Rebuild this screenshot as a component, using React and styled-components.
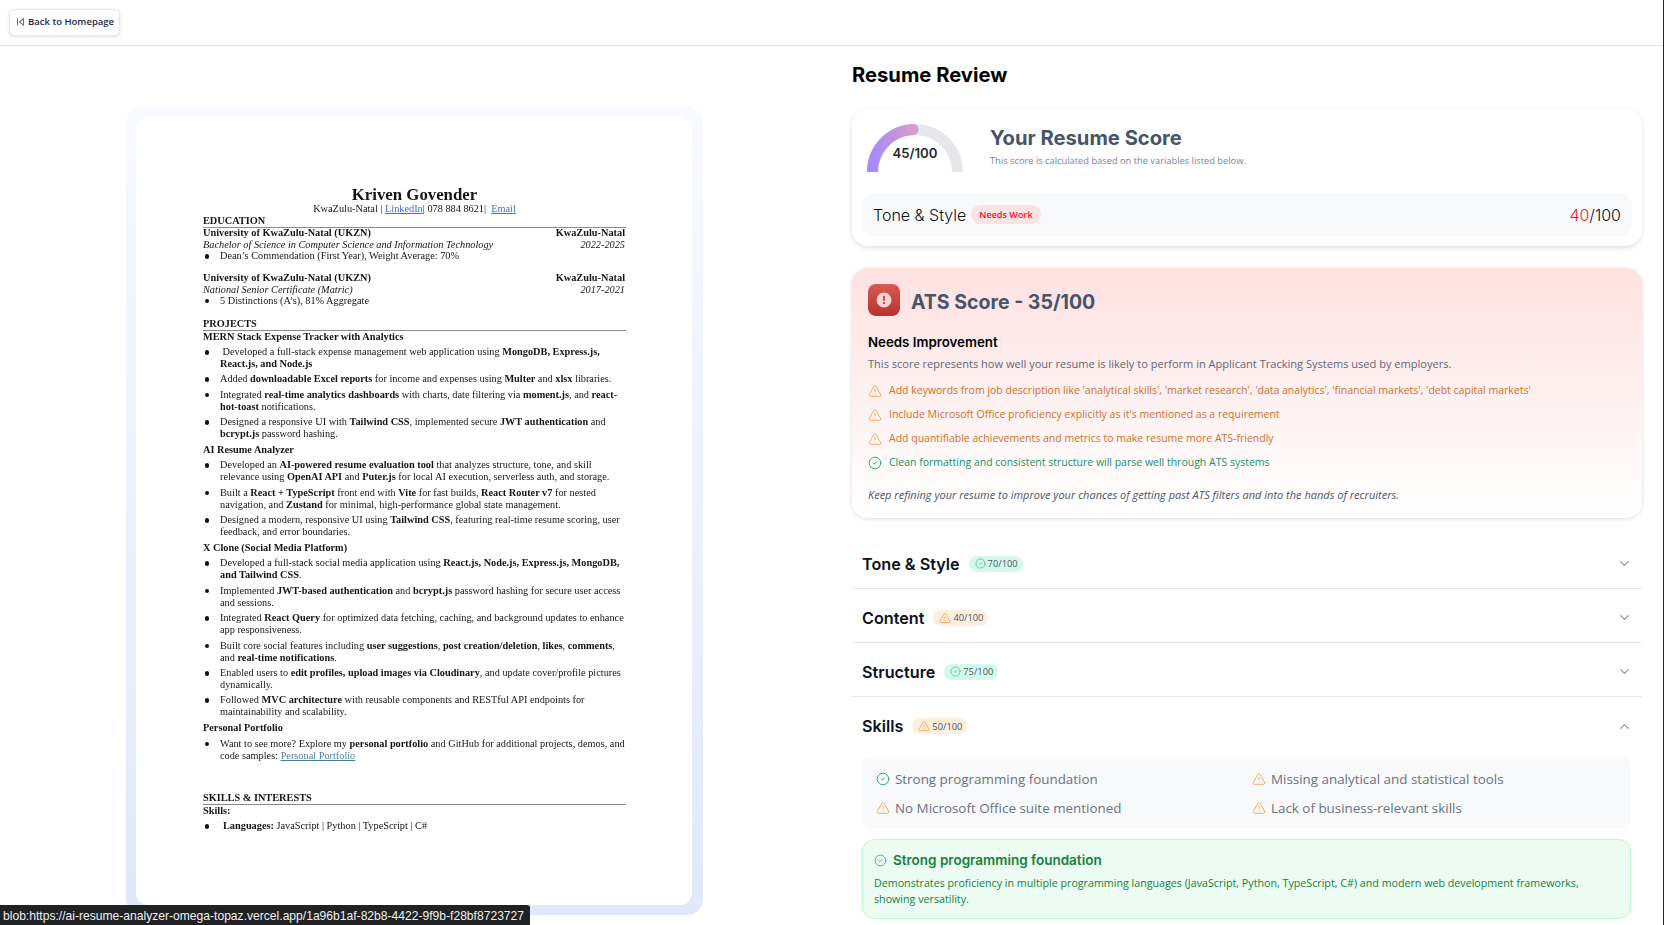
import React from 'react'
import styled, { createGlobalStyle } from 'styled-components'
import { ChevronDown, ChevronUp, TriangleAlert, CircleCheck } from 'lucide-react'

const GlobalStyle = createGlobalStyle`
  html, body {
    margin: 0;
    padding: 0;
    height: 925px;
    overflow: hidden;
    background: #fff;
    font-family: 'Inter', 'Liberation Sans', sans-serif;
  }
  * { box-sizing: border-box; }
`

const Shell = styled.div`
  width: 1664px;
  height: 925px;
  position: relative;
  overflow: hidden;
  border-right: 1px solid #2a2a2a;
  display: flex;
  flex-direction: column;
`

const Nav = styled.nav`
  height: 46px;
  flex: none;
  border-bottom: 1px solid #e5e7eb;
  padding: 9px;
`

const BackButton = styled.a`
  display: inline-flex;
  align-items: center;
  gap: 3px;
  height: 27px;
  width: 111px;
  padding: 0 0 2px 6px;
  background: #fff;
  border: 1px solid #e5e7eb;
  border-radius: 5px;
  box-shadow: 0 1px 3px rgba(0, 0, 0, 0.12);
  color: #1e2a4a;
  font-family: 'Open Sans', sans-serif;
  font-size: 9.5px;
  font-weight: 600;
  white-space: nowrap;
`

const Main = styled.main`
  flex: 1;
  display: flex;
  min-height: 0;
`

const LeftPane = styled.section`
  width: 832px;
  flex: none;
  padding: 61px 0 0 126px;
`

const Frame = styled.div`
  width: 577px;
  height: 808px;
  padding: 10px 11px 10px 10px;
  border-radius: 16px;
  background: linear-gradient(to bottom, #f8faff, #e0e8f9);
`

const Page = styled.div`
  height: 100%;
  padding: 69px 66px 0 67px;
  background: #fff;
  border-radius: 12px;
  color: #151515;
  font-family: 'Liberation Serif', serif;
  font-size: 10.3px;
  line-height: 12px;
  white-space: nowrap;
  filter: blur(0.3px);
`

const Name = styled.div`
  font-size: 16.8px;
  line-height: 17px;
  font-weight: 700;
  text-align: center;
`

const Contact = styled.div`
  text-align: center;
  margin-top: ${p => p.$top || 0}px;
  a { color: #3b6fd8; text-decoration: underline; }
`

const SectionHead = styled.div`
  font-weight: 700;
  border-bottom: 1px solid #8a8a8a;
  margin-top: ${p => p.$top || 0}px;
`

const EntryRow = styled.div`
  display: flex;
  justify-content: space-between;
  padding-right: 1px;
  margin-top: ${p => p.$top || 0}px;
  font-weight: ${p => (p.$italic ? 400 : 700)};
  font-style: ${p => (p.$italic ? 'italic' : 'normal')};
`

const SubHead = styled.div`
  font-weight: 700;
  margin-top: ${p => p.$top || 0}px;
`

const Bullet = styled.div`
  position: relative;
  padding-left: ${p => p.$indent || 17}px;
  margin-top: ${p => (p.$top === undefined ? 3.42 : p.$top)}px;
  &::before {
    content: '';
    position: absolute;
    left: 1.5px;
    top: 4px;
    width: 4.5px;
    height: 4.5px;
    border-radius: 50%;
    background: #111;
  }
  a { color: #4a7fa0; text-decoration: underline; }
`

const RightPane = styled.section`
  flex: 1;
  padding: 16px 21px 0 20px;
  min-width: 0;
`

const PageTitle = styled.h1`
  margin: 0;
  height: 47px;
  font-size: 20.2px;
  line-height: 26px;
  font-weight: 700;
  color: #000;
`

const ScoreCard = styled.div`
  height: 137px;
  margin-top: 0;
  padding: 14px 10px 0 10px;
  border-radius: 16px;
  background: #fff;
  box-shadow: 0 2px 5px rgba(0, 0, 0, 0.12);
`

const ScoreTop = styled.div`
  display: flex;
  align-items: flex-start;
  gap: 27px;
  padding-left: 5px;
`

const GaugeWrap = styled.div`
  position: relative;
  width: 96px;
  height: 49px;
  flex: none;
`

const GaugeText = styled.div`
  position: absolute;
  left: 0;
  right: 0;
  top: 21px;
  text-align: center;
  font-size: 13.2px;
  line-height: 18px;
  font-weight: 600;
  color: #1f2937;
`

const ScoreHeading = styled.div`
  padding-top: 2px;
`

const ScoreTitle = styled.div`
  font-size: 20.2px;
  line-height: 26px;
  font-weight: 700;
  color: #475467;
`

const ScoreSub = styled.div`
  margin-top: 4px;
  font-family: 'Open Sans', sans-serif;
  font-size: 9.3px;
  line-height: 12px;
  color: #7b8494;
`

const CategoryRow = styled.div`
  height: 43px;
  margin-top: 21px;
  padding: 0 11px 0 11px;
  display: flex;
  align-items: center;
  justify-content: space-between;
  border-radius: 12px;
  background: #f8f9fb;
  font-size: 16px;
  color: #0b1220;
  font-weight: 300;
`

const CategoryName = styled.div`
  display: flex;
  align-items: center;
  gap: 5px;
`

const NeedsPill = styled.span`
  display: inline-flex;
  align-items: center;
  height: 19px;
  padding: 0 8px;
  border-radius: 10px;
  background: #fbe3e3;
  color: #e7122c;
  font-family: 'Open Sans', sans-serif;
  font-size: 9.1px;
  font-weight: 600;
`

const Red = styled.span`
  color: #ee1c25;
`

const AtsCard = styled.div`
  height: 250px;
  margin-top: 22px;
  padding: 16px;
  border-radius: 16px;
  background: linear-gradient(to bottom, #fee1e1, #fff);
  box-shadow: 0 1px 4px rgba(0, 0, 0, 0.14);
`

const AtsHead = styled.div`
  height: 32px;
  display: flex;
  align-items: center;
  gap: 11px;
`

const AtsIcon = styled.div`
  width: 32px;
  height: 32px;
  flex: none;
  display: flex;
  align-items: center;
  justify-content: center;
  border-radius: 8px;
  background: linear-gradient(to bottom, #d95a56, #b8322e);
`

const AtsTitle = styled.div`
  padding-top: 4px;
  font-size: 19.5px;
  line-height: 32px;
  font-weight: 700;
  color: #475467;
`

const NeedsTitle = styled.div`
  margin-top: 17px;
  font-size: 13.3px;
  line-height: 18px;
  font-weight: 600;
  color: #000;
`

const AtsText = styled.p`
  margin: 5px 0 0;
  font-family: 'Open Sans', sans-serif;
  font-size: 11.06px;
  line-height: 16px;
  color: #5d6778;
`

const TipList = styled.div`
  margin-top: 10px;
  display: flex;
  flex-direction: column;
  gap: 8px;
`

const Tip = styled.div`
  display: flex;
  align-items: center;
  gap: 7px;
  height: 16px;
  font-family: 'Open Sans', sans-serif;
  font-size: 10.5px;
  color: ${p => (p.$good ? '#10936b' : '#cf6f2c')};
  svg { color: ${p => (p.$good ? '#22a06f' : '#f59f45')}; flex: none; margin-top: 2px; }
`

const AtsNote = styled.p`
  margin: 16.5px 0 0;
  font-family: 'Open Sans', sans-serif;
  font-size: 11px;
  line-height: 16px;
  font-style: italic;
  color: #4b5565;
`

const Accordion = styled.div`
  margin-top: 17px;
`

const AccRow = styled.div`
  height: 54px;
  padding: 4px 10px 0 10px;
  display: flex;
  align-items: center;
  justify-content: space-between;
  border-bottom: ${p => (p.$open ? 'none' : '1px solid #e5e7eb')};
  color: #8a94a6;
`

const AccLabel = styled.div`
  display: flex;
  align-items: center;
  gap: 9px;
  font-size: 16.2px;
  font-weight: 600;
  color: #0b1220;
`

const ScorePill = styled.span`
  display: inline-flex;
  align-items: center;
  gap: 2px;
  height: 16px;
  padding: 0 5px 0 6px;
  border-radius: 8px;
  background: ${p => (p.$good ? '#d3f9ec' : '#fdeedd')};
  color: #4b5563;
  font-family: 'Open Sans', sans-serif;
  font-size: 9.3px;
  font-weight: 400;
  svg { color: ${p => (p.$good ? '#3fb488' : '#f59f45')}; }
`

const SkillsPanel = styled.div`
  height: 70px;
  margin: 7px 11px 0 10px;
  padding: 6px 14px;
  border-radius: 8px;
  background: #f8f9fb;
  display: grid;
  grid-template-columns: 376px 1fr;
  grid-auto-rows: 29px;
  column-gap: 0;
  align-items: center;
`

const SkillItem = styled.div`
  display: flex;
  align-items: center;
  gap: 5px;
  font-family: 'Open Sans', sans-serif;
  font-size: 13.4px;
  color: #6b7280;
  svg { color: ${p => (p.$good ? '#22a06f' : '#f59f45')}; flex: none; }
`

const SkillDetail = styled.div`
  height: 80px;
  margin: 11px 11px 0 10px;
  padding: 12px 11px;
  border: 1px solid #bbf7d0;
  border-radius: 12px;
  background: #edfcf3;
  color: #15803d;
`

const DetailHead = styled.div`
  display: flex;
  align-items: center;
  gap: 6px;
  font-size: 13.5px;
  line-height: 17px;
  font-weight: 600;
  svg { color: #22a06f; }
`

const DetailText = styled.p`
  margin: 6px 0 0;
  font-family: 'Open Sans', sans-serif;
  font-size: 10.7px;
  line-height: 16px;
`

const StatusBar = styled.div`
  position: absolute;
  left: 0;
  bottom: 0;
  width: 530px;
  height: 20px;
  padding-left: 3px;
  overflow: hidden;
  background: #202124;
  color: #f1f1f1;
  border-top-right-radius: 3px;
  font-family: 'Liberation Sans', sans-serif;
  font-size: 12.1px;
  line-height: 23px;
  white-space: nowrap;
`

const Gauge = () => (
  <svg width="96" height="49" viewBox="0 0 96 49">
    <defs>
      <linearGradient id="gaugeFill" x1="0" y1="0" x2="1" y2="0">
        <stop offset="0" stopColor="#a78bfa" />
        <stop offset="1" stopColor="#d49ccc" />
      </linearGradient>
    </defs>
    <path d="M5.5 49 A42.5 42.5 0 0 1 90.5 49" fill="none" stroke="#e5e7eb" strokeWidth="11" />
    <path d="M5.5 49 A42.5 42.5 0 0 1 46 6.5" fill="none" stroke="url(#gaugeFill)" strokeWidth="11" />
    <circle cx="46" cy="6.5" r="5.5" fill="#d49ccc" />
  </svg>
)

const BackIcon = () => (
  <svg width="9" height="10" viewBox="0 0 9 10" fill="none" stroke="#6b7280" strokeWidth="1.1">
    <path d="M1.5 1.5v7" />
    <path d="M7.5 1.8 3.4 5l4.1 3.2z" />
  </svg>
)

const Warn = ({ size = 14 }) => <TriangleAlert size={size} strokeWidth={1.5} />
const Check = ({ size = 14 }) => <CircleCheck size={size} strokeWidth={1.5} />

const resumeBlocks = (
  <>
    <Name>Kriven Govender</Name>
    <Contact>KwaZulu-Natal | <a>LinkedIn</a>| 078 884 8621| &nbsp;<a>Email</a></Contact>
    <SectionHead>EDUCATION</SectionHead>
    <EntryRow $top={-1}><span>University of KwaZulu-Natal (UKZN)</span><span>KwaZulu-Natal</span></EntryRow>
    <EntryRow $italic><span>Bachelor of Science in Computer Science and Information Technology</span><span>2022-2025</span></EntryRow>
    <Bullet $top={-1}>Dean’s Commendation (First Year), Weight Average: 70%</Bullet>
    <EntryRow $top={9.8}><span>University of KwaZulu-Natal (UKZN)</span><span>KwaZulu-Natal</span></EntryRow>
    <EntryRow $italic><span>National Senior Certificate (Matric)</span><span>2017-2021</span></EntryRow>
    <Bullet $top={-1}>5 Distinctions (A’s), 81% Aggregate</Bullet>
    <SectionHead $top={10.8}>PROJECTS</SectionHead>
    <SubHead>MERN Stack Expense Tracker with Analytics</SubHead>
    <Bullet>&nbsp;Developed a full-stack expense management web application using <b>MongoDB, Express.js,</b><br /><b>React.js, and Node.js</b></Bullet>
    <Bullet>Added <b>downloadable Excel reports</b> for income and expenses using <b>Multer</b> and <b>xlsx</b> libraries.</Bullet>
    <Bullet>Integrated <b>real-time analytics dashboards</b> with charts, date filtering via <b>moment.js</b>, and <b>react-</b><br /><b>hot-toast</b> notifications.</Bullet>
    <Bullet>Designed a responsive UI with <b>Tailwind CSS</b>, implemented secure <b>JWT authentication</b> and<br /><b>bcrypt.js</b> password hashing.</Bullet>
    <SubHead $top={3.8}>AI Resume Analyzer</SubHead>
    <Bullet>Developed an <b>AI-powered resume evaluation tool</b> that analyzes structure, tone, and skill<br />relevance using <b>OpenAI API</b> and <b>Puter.js</b> for local AI execution, serverless auth, and storage.</Bullet>
    <Bullet>Built a <b>React + TypeScript</b> front end with <b>Vite</b> for fast builds, <b>React Router v7</b> for nested<br />navigation, and <b>Zustand</b> for minimal, high-performance global state management.</Bullet>
    <Bullet>Designed a modern, responsive UI using <b>Tailwind CSS</b>, featuring real-time resume scoring, user<br />feedback, and error boundaries.</Bullet>
    <SubHead $top={3.8}>X Clone (Social Media Platform)</SubHead>
    <Bullet>Developed a full-stack social media application using <b>React.js, Node.js, Express.js, MongoDB,</b><br /><b>and Tailwind CSS</b>.</Bullet>
    <Bullet>Implemented <b>JWT-based authentication</b> and <b>bcrypt.js</b> password hashing for secure user access<br />and sessions.</Bullet>
    <Bullet>Integrated <b>React Query</b> for optimized data fetching, caching, and background updates to enhance<br />app responsiveness.</Bullet>
    <Bullet>Built core social features including <b>user suggestions</b>, <b>post creation/deletion</b>, <b>likes</b>, <b>comments</b>,<br />and <b>real-time notifications</b>.</Bullet>
    <Bullet>Enabled users to <b>edit profiles, upload images via Cloudinary</b>, and update cover/profile pictures<br />dynamically.</Bullet>
    <Bullet>Followed <b>MVC architecture</b> with reusable components and RESTful API endpoints for<br />maintainability and scalability.</Bullet>
    <SubHead $top={3.8}>Personal Portfolio</SubHead>
    <Bullet>Want to see more? Explore my <b>personal portfolio</b> and GitHub for additional projects, demos, and<br />code samples: <a>Personal Portfolio</a></Bullet>
    <SectionHead $top={30}>SKILLS &amp; INTERESTS</SectionHead>
    <SubHead>Skills:</SubHead>
    <Bullet $indent={20}><b>Languages:</b> JavaScript | Python | TypeScript | C#</Bullet>
  </>
)

const App = () => (
  <Shell>
    <GlobalStyle />
    <Nav>
      <BackButton><BackIcon />Back to Homepage</BackButton>
    </Nav>
    <Main>
      <LeftPane>
        <Frame>
          <Page>{resumeBlocks}</Page>
        </Frame>
      </LeftPane>
      <RightPane>
        <PageTitle>Resume Review</PageTitle>
        <ScoreCard>
          <ScoreTop>
            <GaugeWrap>
              <Gauge />
              <GaugeText>45/100</GaugeText>
            </GaugeWrap>
            <ScoreHeading>
              <ScoreTitle>Your Resume Score</ScoreTitle>
              <ScoreSub>This score is calculated based on the variables listed below.</ScoreSub>
            </ScoreHeading>
          </ScoreTop>
          <CategoryRow>
            <CategoryName>Tone &amp; Style <NeedsPill>Needs Work</NeedsPill></CategoryName>
            <span><Red>40</Red>/100</span>
          </CategoryRow>
        </ScoreCard>
        <AtsCard>
          <AtsHead>
            <AtsIcon>
              <svg width="16" height="16" viewBox="0 0 16 16">
                <circle cx="8" cy="8" r="7.5" fill="#f6d2d0" />
                <rect x="7.2" y="3.8" width="1.6" height="5.2" rx="0.8" fill="#b8322e" />
                <circle cx="8" cy="11" r="1" fill="#b8322e" />
              </svg>
            </AtsIcon>
            <AtsTitle>ATS Score - 35/100</AtsTitle>
          </AtsHead>
          <NeedsTitle>Needs Improvement</NeedsTitle>
          <AtsText>This score represents how well your resume is likely to perform in Applicant Tracking Systems used by employers.</AtsText>
          <TipList>
            <Tip><Warn />Add keywords from job description like 'analytical skills', 'market research', 'data analytics', 'financial markets', 'debt capital markets'</Tip>
            <Tip><Warn />Include Microsoft Office proficiency explicitly as it's mentioned as a requirement</Tip>
            <Tip><Warn />Add quantifiable achievements and metrics to make resume more ATS-friendly</Tip>
            <Tip $good><Check />Clean formatting and consistent structure will parse well through ATS systems</Tip>
          </TipList>
          <AtsNote>Keep refining your resume to improve your chances of getting past ATS filters and into the hands of recruiters.</AtsNote>
        </AtsCard>
        <Accordion>
          <AccRow>
            <AccLabel>Tone &amp; Style <ScorePill $good><Check size={11} />70/100</ScorePill></AccLabel>
            <ChevronDown size={15} />
          </AccRow>
          <AccRow>
            <AccLabel>Content <ScorePill><Warn size={12} />40/100</ScorePill></AccLabel>
            <ChevronDown size={15} />
          </AccRow>
          <AccRow>
            <AccLabel>Structure <ScorePill $good><Check size={11} />75/100</ScorePill></AccLabel>
            <ChevronDown size={15} />
          </AccRow>
          <AccRow $open>
            <AccLabel>Skills <ScorePill><Warn size={12} />50/100</ScorePill></AccLabel>
            <ChevronUp size={15} />
          </AccRow>
          <SkillsPanel>
            <SkillItem $good><Check />Strong programming foundation</SkillItem>
            <SkillItem><Warn />Missing analytical and statistical tools</SkillItem>
            <SkillItem><Warn />No Microsoft Office suite mentioned</SkillItem>
            <SkillItem><Warn />Lack of business-relevant skills</SkillItem>
          </SkillsPanel>
          <SkillDetail>
            <DetailHead><Check size={13} />Strong programming foundation</DetailHead>
            <DetailText>Demonstrates proficiency in multiple programming languages (JavaScript, Python, TypeScript, C#) and modern web development frameworks, showing versatility.</DetailText>
          </SkillDetail>
        </Accordion>
      </RightPane>
    </Main>
    <StatusBar>blob:https://ai-resume-analyzer-omega-topaz.vercel.app/1a96b1af-82b8-4422-9f9b-f28bf8723727</StatusBar>
  </Shell>
)

export default App
